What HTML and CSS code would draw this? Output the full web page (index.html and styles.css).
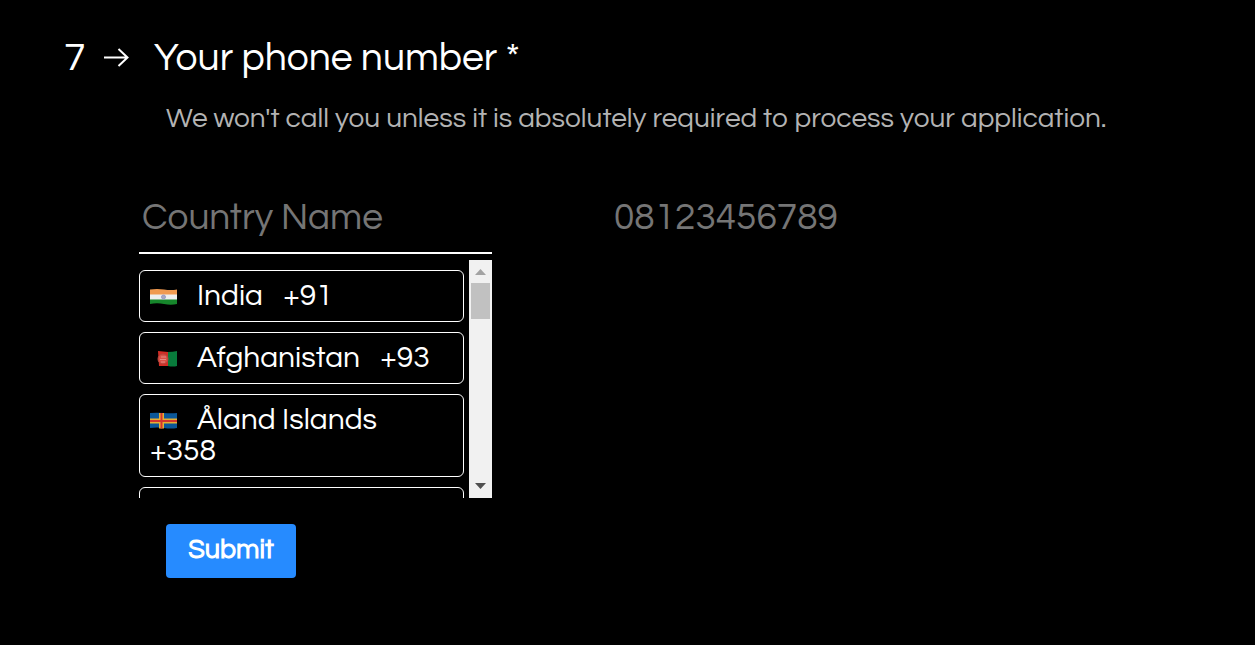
FILE: index.html
```html
<!DOCTYPE html>
<html lang="en">
<head>
<meta charset="utf-8">
<title>Your phone number</title>
<meta name="viewport" content="width=device-width, initial-scale=1">
<link rel="stylesheet" href="styles.css">
</head>
<body>
<form class="question">
  <header class="heading">
    <span class="number">7</span>
    <svg class="arrow" viewBox="0 0 26 20" aria-hidden="true"><path d="M1 9.500H24.500M15.500 1L24.500 9.500L15.500 18"/></svg>
    <h1 class="title">Your phone number *</h1>
  </header>
  <p class="hint">We won't call you unless it is absolutely required to process your application.</p>
  <div class="fields">
    <div class="country">
      <input class="field field-country" type="text" placeholder="Country Name" aria-label="Country Name">
      <div class="dropdown">
        <div class="options">
          <button class="option" type="button"><svg class="flag" viewBox="0 0 28 18" aria-hidden="true"><path fill="#f09a50" d="M0 1.500Q7 .5 14 1.500T27 1.500V7H0Z"/><path fill="#eee" d="M0 6.500H27V12H0Z"/><path fill="#16862b" d="M0 11.500H27V16Q21 17.500 14 16T0 16Z"/><circle cx="13.500" cy="9" r="2" fill="#aab" stroke="#9a9cc8"/></svg><span class="name">India</span> <span class="code">+91</span></button>
          <button class="option" type="button"><svg class="flag" viewBox="0 0 28 18" aria-hidden="true"><path fill="#d32d25" d="M8 1L18 2V16L9 16Z"/><path fill="#087b3b" d="M18 2Q23 2 27 1V16Q23 17 18 16Z"/><circle cx="13" cy="9" r="5" fill="#da5146" stroke="#b5443c"/><path d="M10 9.500h6M11 7h5M11 12h4" fill="none" stroke="#e58c84"/></svg><span class="name">Afghanistan</span> <span class="code">+93</span></button>
          <button class="option" type="button"><svg class="flag" viewBox="0 0 28 18" aria-hidden="true"><path fill="#0b5798" d="M0 1Q7 .5 14 1T27 1V16Q21 17 14 16T0 16Z"/><path fill="none" stroke="#e5ae32" stroke-width="5" d="M11.500 1V16.500M0 9H27"/><path fill="none" stroke="#d5342d" stroke-width="2" d="M11.500 1V16.500M0 9H27"/></svg><span class="name">Åland Islands</span> <span class="code">+358</span></button>
          <button class="option" type="button" aria-label="Albania +355"><svg class="flag" viewBox="0 0 28 18" aria-hidden="true"><path fill="#d32d25" d="M0 1H27V16H0Z"/></svg></button>
        </div>
        <div class="scrollbar" aria-hidden="true">
          <svg class="scroll-arrow" viewBox="0 0 23 23"><path fill="#a3a3a3" d="M6 15L11.500 9L17 15Z"/></svg>
          <div class="track"><div class="thumb"></div></div>
          <svg class="scroll-arrow" viewBox="0 0 23 23"><path fill="#505050" d="M6 8L11.500 14L17 8Z"/></svg>
        </div>
      </div>
    </div>
    <input class="field" type="tel" placeholder="08123456789" aria-label="Phone number">
  </div>
  <button class="submit" type="submit">Submit</button>
</form>
</body>
</html>
```
FILE: styles.css
```css
* { box-sizing: border-box; }
body { margin: 0; background: #000; color: #fff; font-family: Questrial, Inter, sans-serif; }
button, input { font: inherit; color: inherit; }
.question { padding: 33px 64px; }
.heading { display: flex; align-items: center; height: 50px; font-size: 39px; line-height: 50px; }
.number { width: 39px; }
.arrow { width: 26px; height: 20px; margin-right: 25px; fill: none; stroke: #fff; stroke-width: 2; }
.title { margin: 0; font-size: 39px; font-weight: 400; }
.hint { margin: 18px 0 0 102px; font-size: 28px; line-height: 36px; color: #b3b3b3; }
.fields { display: grid; grid-template-columns: 353px minmax(0, 1fr); column-gap: 119px; align-items: start; margin: 43px 0 0 75px; }
.field { display: block; width: 100%; height: 74px; padding: 4px 3px 0; border: 0; border-bottom: 2px solid transparent; background: transparent; font-size: 37px; outline: 0; }
.field-country { border-bottom-color: #fff; }
.field::placeholder { color: #757575; opacity: 1; }
.dropdown { display: flex; gap: 5px; height: 238px; margin-top: 6px; }
.options { flex: 1; display: flex; flex-direction: column; gap: 10px; padding-top: 10px; overflow-y: auto; scrollbar-width: none; }
.option { flex: none; padding: 9px 10px 10px; border: 1px solid #fff; border-radius: 6px; background: transparent; text-align: left; font-size: 30px; line-height: 31px; }
.flag { width: 28px; height: 18px; margin-right: 19px; vertical-align: -1px; }
.name { margin-right: 14px; }
.scrollbar { display: flex; flex-direction: column; width: 23px; background: #f1f1f1; }
.scroll-arrow { width: 23px; height: 23px; }
.track { flex: 1; padding: 0 2px; }
.thumb { height: 36px; background: #c1c1c1; }
.submit { display: block; margin: 26px 0 0 102px; height: 54px; width: 130px; padding: 0 0 3px; border: 0; border-radius: 4px; background: #268bff; font-size: 27px; font-weight: 700; }
```
